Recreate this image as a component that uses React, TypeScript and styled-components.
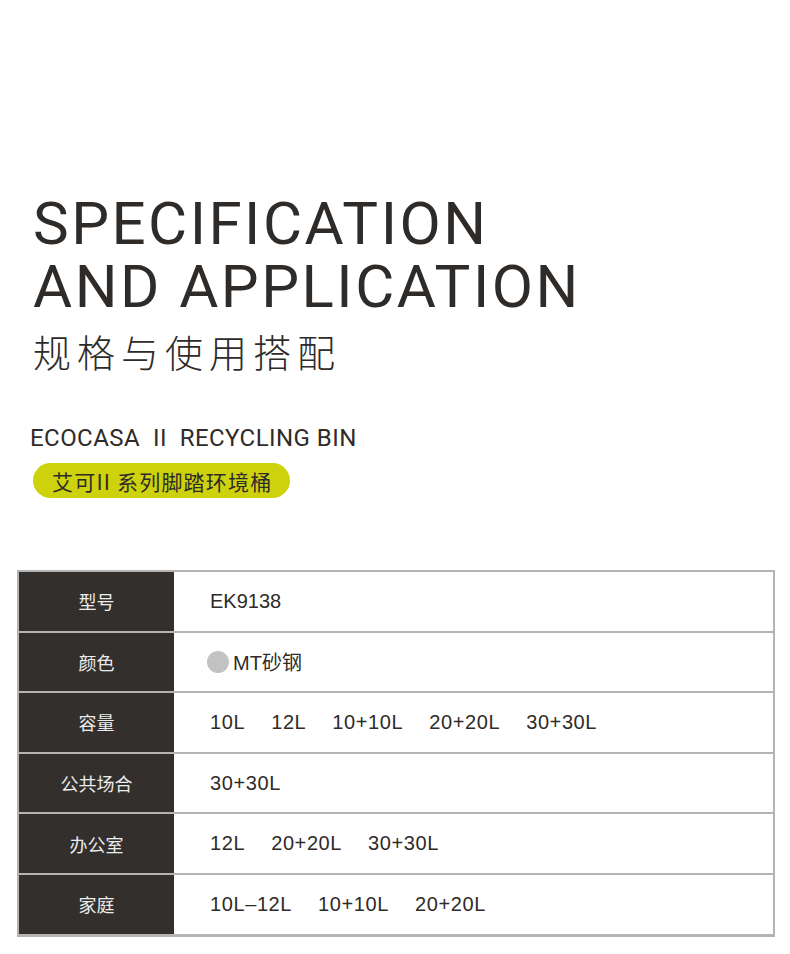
import React from "react";
import styled, {createGlobalStyle} from "styled-components";

const GlobalStyle = createGlobalStyle`
  html, body {
    margin: 0;
    padding: 0;
    background: #ffffff;
  }
`

const Page = styled.div`
  width: 790px;
  height: 954px;
  box-sizing: border-box;
  padding: 192px 0 0 0;
  font-family: "Liberation Sans", "Noto Sans CJK SC", sans-serif;
  color: #2f2b28;
`

const Heading = styled.div`
  padding-left: 33px;
`

const TitleLine = styled.div`
  height: 63px;
  font-family: Roboto, "Liberation Sans", sans-serif;
  font-weight: 400;
  font-size: 60px;
  line-height: 63px;
  letter-spacing: 2.5px;
  color: #2f2b28;
`

const SubTitle = styled.h2`
  margin: 8px 0 0;
  font-family: "Noto Sans CJK SC", sans-serif;
  font-weight: 300;
  font-size: 38px;
  line-height: 50px;
  letter-spacing: 6px;
  color: #2f2b28;
`

const Product = styled.div`
  margin-top: 48px;
  padding-left: 30px;
  font-family: Roboto, "Liberation Sans", sans-serif;
  font-size: 24px;
  line-height: 28px;
  letter-spacing: 0.45px;
  color: #2f2b28;
`

const Badge = styled.div`
  display: inline-flex;
  align-items: center;
  margin: 11px 0 0 33px;
  height: 35px;
  padding: 0 18px 0 19px;
  border-radius: 18px;
  background: #cdd20d;
  font-family: "Noto Sans CJK SC", sans-serif;
  font-size: 21px;
  letter-spacing: 1.2px;
  color: #2f2b28;
`

const Table = styled.div`
  margin: 72px 0 0 17px;
  width: 758px;
  border: 2px solid #b4b4b4;
  border-bottom-width: 1px;
  box-sizing: border-box;
`

const Row = styled.div`
  display: grid;
  grid-template-columns: 155px 1fr;
  height: 60.6px;
  border-bottom: 2px solid #b4b4b4;
  box-sizing: border-box;
`

const Label = styled.div`
  display: flex;
  align-items: center;
  justify-content: center;
  background: #332f2c;
  font-family: "Noto Sans CJK SC", sans-serif;
  font-size: 18px;
  color: #ececec;
`

const Value = styled.div`
  display: flex;
  align-items: center;
  gap: 26px;
  padding-left: 36px;
  font-family: "Liberation Sans", "Noto Sans CJK SC", sans-serif;
  font-size: 20px;
  color: #2f2b28;
`

const Item = styled.span`
  letter-spacing: 0.6px;
`

const Swatch = styled.span`
  display: flex;
  align-items: center;
  gap: 4px;
  margin-left: -3px;
`

const Dot = styled.span<{ $color: string }>`
  width: 22px;
  height: 22px;
  border-radius: 50%;
  background: ${p => p.$color};
`

const rows: { label: string; items: string[] }[] = [
	{label: '容量', items: ['10L', '12L', '10+10L', '20+20L', '30+30L']},
	{label: '公共场合', items: ['30+30L']},
	{label: '办公室', items: ['12L', '20+20L', '30+30L']},
	{label: '家庭', items: ['10L–12L', '10+10L', '20+20L']},
]

export default function App(): JSX.Element {
	return (
		<Page>
			<GlobalStyle/>
			<Heading>
				<TitleLine>SPECIFICATION</TitleLine>
				<TitleLine>AND APPLICATION</TitleLine>
				<SubTitle>规格与使用搭配</SubTitle>
			</Heading>
			<Product>ECOCASA&nbsp;&nbsp;II&nbsp;&nbsp;RECYCLING BIN</Product>
			<Badge>艾可II 系列脚踏环境桶</Badge>
			<Table>
				<Row>
					<Label>型号</Label>
					<Value>EK9138</Value>
				</Row>
				<Row>
					<Label>颜色</Label>
					<Value>
						<Swatch><Dot $color="#c2c2c2"/>MT砂钢</Swatch>
					</Value>
				</Row>
				{rows.map(r => (
					<Row key={r.label}>
						<Label>{r.label}</Label>
						<Value>
							{r.items.map(i => <Item key={i}>{i}</Item>)}
						</Value>
					</Row>
				))}
			</Table>
		</Page>
	)
}
